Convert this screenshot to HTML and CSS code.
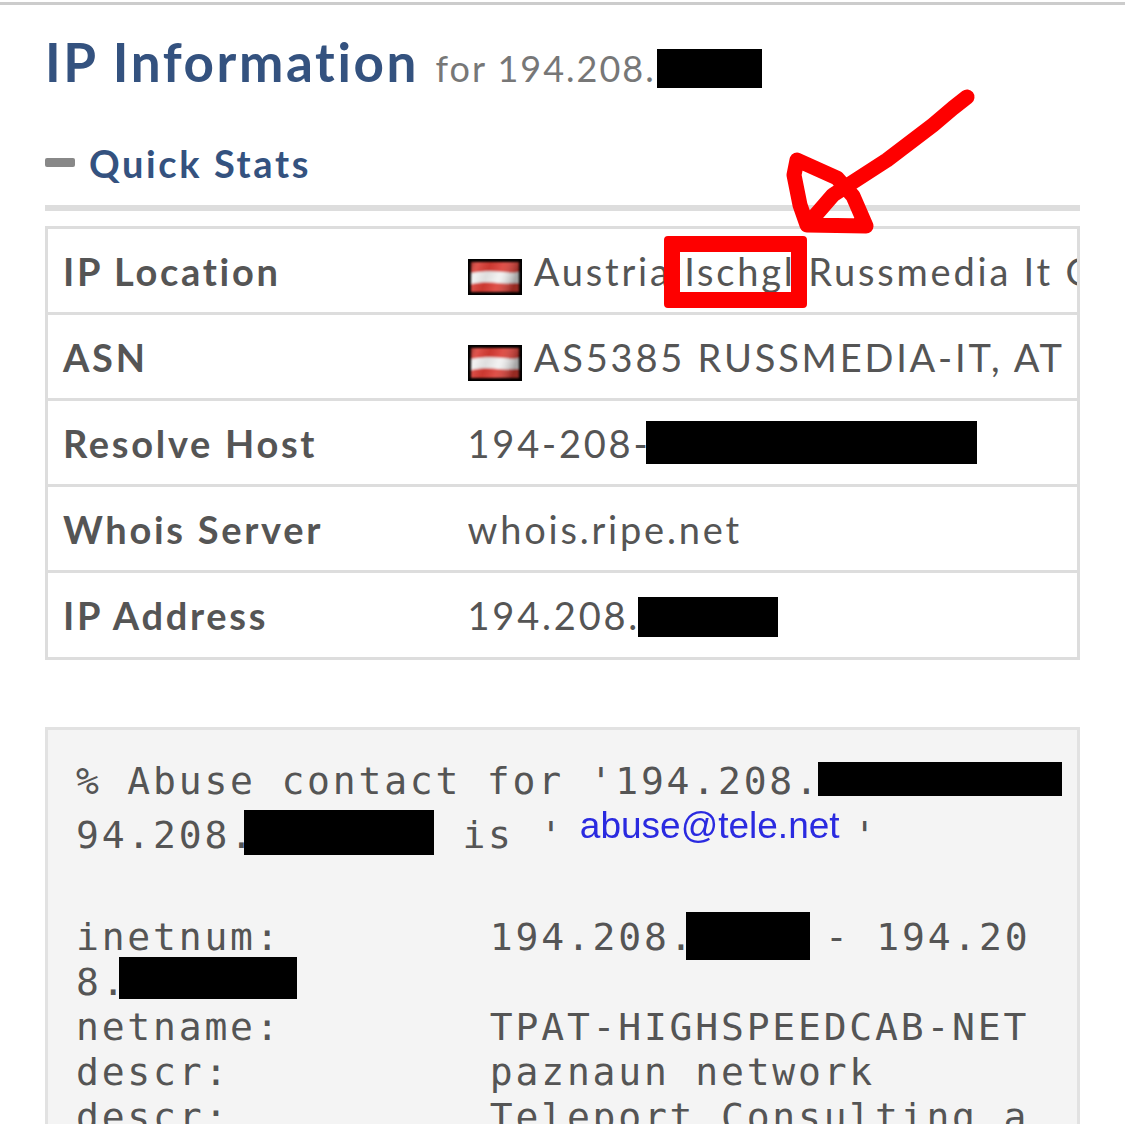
FILE: index.html
```html
<!DOCTYPE html>
<html lang="en">
<head>
<meta charset="utf-8">
<title>IP Information</title>
<link rel="stylesheet" href="styles.css">
</head>
<body>
<svg class="defs" width="0" height="0" aria-hidden="true">
  <defs>
    <filter id="soft" x="-10%" y="-10%" width="120%" height="120%"><feGaussianBlur stdDeviation="1"/></filter>
    <linearGradient id="sheen" x1="0" y1="0" x2="1" y2="0.2">
      <stop offset="0" stop-color="#000" stop-opacity="0.3"/>
      <stop offset="0.15" stop-color="#fff" stop-opacity="0.12"/>
      <stop offset="0.4" stop-color="#000" stop-opacity="0.08"/>
      <stop offset="0.65" stop-color="#fff" stop-opacity="0.1"/>
      <stop offset="1" stop-color="#000" stop-opacity="0.32"/>
    </linearGradient>
    <symbol id="flag-at" viewBox="0 0 54 36">
      <rect width="54" height="36" fill="#000"/>
      <g filter="url(#soft)">
        <rect x="3" y="3" width="48" height="30" fill="#dc3d35"/>
        <path d="M3 14C15 12 25 12 35 13S46 14 51 13V24C45 24 38 25 30 24S12 23 3 25Z" fill="#f2f2f2"/>
        <rect x="3" y="3" width="48" height="30" fill="url(#sheen)"/>
      </g>
    </symbol>
  </defs>
</svg>
<main class="page">
  <h1 class="title">IP Information <small class="sub">for 194.208.<span class="rd rd-title"></span></small></h1>
  <h2 class="section"><span class="minus"></span>Quick Stats</h2>
  <table class="stats">
    <tr>
      <th>IP Location</th>
      <td><div class="clip"><svg class="flag"><use href="#flag-at"/></svg> Austria Ischgl Russmedia It Gmbh</div></td>
    </tr>
    <tr>
      <th>ASN</th>
      <td><div class="clip"><svg class="flag"><use href="#flag-at"/></svg> AS5385 RUSSMEDIA-IT, AT</div></td>
    </tr>
    <tr>
      <th>Resolve Host</th>
      <td><div class="clip">194-208-<span class="rd rd-host"></span></div></td>
    </tr>
    <tr>
      <th>Whois Server</th>
      <td><div class="clip">whois.ripe.net</div></td>
    </tr>
    <tr>
      <th>IP Address</th>
      <td><div class="clip">194.208.<span class="rd rd-addr"></span></div></td>
    </tr>
  </table>
  <div class="whois">
    <span class="ln">% Abuse contact for '194.208.<span class="rd rd-w1"></span></span>
    <span class="ln ln-tall">94.208.<span class="rd rd-w2"></span> is ' <span class="mail">abuse@tele.net</span> '</span>
    <span class="ln">inetnum:        <span class="val">194.208.<span class="rd rd-w3"></span> - 194.20</span></span>
    <span class="ln">8.<span class="rd rd-w4"></span></span>
    <span class="ln">netname:        <span class="val">TPAT-HIGHSPEEDCAB-NET</span></span>
    <span class="ln">descr:          <span class="val">paznaun network</span></span>
    <span class="ln">descr:          <span class="val">Teleport Consulting a</span></span>
  </div>
</main>
<div class="mark-box"></div>
<svg class="mark-arrow" width="1125" height="300" viewBox="0 0 1125 300" aria-hidden="true">
  <path d="M967 97L953 108L933 125L887 160L853 182L833 195L807 225L866 226L853 196L837 178L797 160L794 175L800 205L807 225" fill="none" stroke="#fe0000" stroke-width="15" stroke-linecap="round" stroke-linejoin="round"/>
</svg>
</body>
</html>
```
FILE: styles.css
```css
* { box-sizing: border-box; }
html, body { margin: 0; height: 1125px; overflow: hidden; background: #fff; }
body { position: relative; font-family: Lato, "Liberation Sans", sans-serif; color: #555; }
.defs { position: absolute; }
.page { border-top: 3px solid #ccc; margin-top: 2px; padding: 0 45px; }
.title { margin: 24px 0 0; font-size: 53px; line-height: 66px; font-weight: 700; color: #34527f; letter-spacing: 2.6px; white-space: nowrap; }
.sub { font-size: 36px; font-weight: 400; color: #777; margin-left: 1px; letter-spacing: 2px; }
.rd { display: inline-block; background: #000; vertical-align: middle; }
.rd-title { width: 105px; height: 39px; margin: -14px 0 -6px 1px; }
.section { display: flex; align-items: center; margin: 39px 0 0; padding-bottom: 19px; height: 71px; border-bottom: 6px solid #ddd; font-size: 38px; line-height: 46px; font-weight: 700; color: #34527f; letter-spacing: 2.6px; }
.minus { width: 30px; height: 9px; margin: -2px 14px 0 0; background: #888; border-radius: 2px; }
.stats { width: 1035px; margin-top: 15px; border-collapse: collapse; table-layout: fixed; }
.stats tr { height: 86px; }
.stats tr:last-child { height: 87px; }
.stats th, .stats td { padding: 0; border: 3px solid #ddd; border-width: 3px 0; }
.stats tr th { border-left-width: 3px; }
.stats tr td { border-right-width: 3px; }
.stats th { width: 421px; padding-left: 15px; text-align: left; font-size: 38px; font-weight: 700; letter-spacing: 2.7px; color: #555; }
.stats td { font-size: 38px; font-weight: 400; letter-spacing: 2.8px; color: #555; }
.clip { overflow: hidden; white-space: nowrap; height: 60px; line-height: 60px; }
.flag { width: 54px; height: 36px; vertical-align: -9px; margin-right: 1px; }
.rd-host { width: 331px; height: 43px; margin: -15px 0 -5px -4px; }
.rd-addr { width: 140px; height: 40px; margin: -13px 0 -7px -2px; }
.whois { margin-top: 67px; height: 397px; padding: 29px 0 0 28px; background: #f4f4f4; border: 3px solid #e2e2e2; border-bottom: 0; font-family: "DejaVu Sans Mono", "Liberation Mono", monospace; font-size: 38px; letter-spacing: 2.8px; color: #555; overflow: hidden; }
.ln { display: block; height: 45px; line-height: 45px; white-space: pre; }
.ln-tall { margin: -1px 0 67px; }
.val { margin-left: 3px; }
.rd-w1 { width: 244px; height: 34px; margin: -13px 0 -3px -3px; }
.rd-w2 { width: 190px; height: 45px; margin: -13px 3px -3px -12px; }
.rd-w3 { width: 124px; height: 48px; margin: -12px -11px -4px -9px; }
.rd-w4 { width: 178px; height: 42px; margin: -15px 0 -1px -8px; }
.mail { font-family: "Liberation Sans", Arial, sans-serif; font-size: 37px; letter-spacing: 0; color: #2a2ae0; filter: blur(0.5px); vertical-align: 10px; margin: 0 -12px 0 -11px; }
.mark-box { position: absolute; left: 664px; top: 236px; width: 143px; height: 72px; border: 16px solid #fe0000; border-radius: 4px; }
.mark-arrow { position: absolute; left: 0; top: 0; }
```
